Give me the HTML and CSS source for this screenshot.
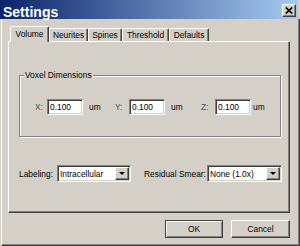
FILE: index.html
```html
<!DOCTYPE html>
<html lang="en">
<head>
  <meta charset="UTF-8">
  <title>Settings</title>
  <link rel="stylesheet" href="styles.css">
</head>
<body>
  <div class="window">
    <div class="titlebar">
      <span class="title">Settings</span>
      <span class="close">
        <svg width="8" height="7" viewBox="0 0 8 7"><path d="M0.8 0.5 L7.2 6.5 M7.2 0.5 L0.8 6.5" stroke="#000" stroke-width="1.7"/></svg>
      </span>
    </div>
    <div class="body">
      <div class="tabs">
        <div class="tab active w-volume">Volume</div>
        <div class="tab w-neurites">Neurites</div>
        <div class="tab w-spines">Spines</div>
        <div class="tab w-threshold">Threshold</div>
        <div class="tab w-defaults">Defaults</div>
      </div>
      <div class="panel">
        <fieldset class="group">
          <legend>Voxel Dimensions</legend>
          <div class="dims">
            <span class="lbl lbl-x">X:</span>
            <span class="field">0.100</span>
            <span class="unit unit-x">um</span>
            <span class="lbl lbl-yz">Y:</span>
            <span class="field">0.100</span>
            <span class="unit unit-y">um</span>
            <span class="lbl lbl-yz">Z:</span>
            <span class="field">0.100</span>
            <span class="unit unit-z">um</span>
          </div>
        </fieldset>
        <div class="options">
          <span class="opt-label w-labeling">Labeling:</span>
          <div class="select w-sel1"><span>Intracellular</span><span class="drop"><span class="arrow"></span></span></div>
          <span class="opt-label w-smear">Residual Smear:</span>
          <div class="select w-sel2"><span>None (1.0x)</span><span class="drop"><span class="arrow"></span></span></div>
        </div>
      </div>
      <div class="buttons">
        <div class="btn btn-default w-ok">OK</div>
        <div class="btn w-cancel">Cancel</div>
      </div>
    </div>
  </div>
</body>
</html>
```

FILE: styles.css
```css
* {
  box-sizing: border-box;
}
body {
  margin: 0;
  font-family: "Liberation Sans", Arial, sans-serif;
  font-size: 8.4px;
  color: #000;
}
.window {
  width: 300px;
  height: 246px;
  background: #d4d0c8;
  display: flex;
  flex-direction: column;
  overflow: hidden;
}
.titlebar {
  height: 19px;
  width: 298px;
  flex: none;
  background: linear-gradient(90deg, #0a246a, #a6caf0);
  display: flex;
  justify-content: space-between;
}
.title {
  color: #fff;
  font-weight: bold;
  font-size: 14px;
  padding: 4px 0 0 3px;
  line-height: normal;
}
.close {
  width: 14px;
  height: 13px;
  margin: 4px 2px 0 0;
  background: #d4d0c8;
  border: 1px solid;
  border-color: #fff #404040 #404040 #fff;
  box-shadow: inset -1px -1px 0 #808080;
  display: flex;
  align-items: center;
  justify-content: center;
}
.body {
  flex: 1;
  margin-left: 1px;
  border-left: 1px solid #fff;
  border-right: 1px solid #404040;
  border-bottom: 1px solid #404040;
  box-shadow: inset -1px -1px 0 #808080;
  padding: 7px 0 0 6px;
  display: flex;
  flex-direction: column;
}
.tabs {
  display: flex;
  align-items: flex-end;
  height: 15px;
  padding-left: 2px;
}
.tab {
  height: 13px;
  border-top: 1px solid #fff;
  border-left: 1px solid #fff;
  border-right: 1px solid #404040;
  box-shadow: inset -1px 0 0 #808080;
  border-radius: 2px 2px 0 0;
  display: flex;
  align-items: center;
  justify-content: center;
  line-height: 10px;
}
.tab.active {
  height: 16px;
  margin-bottom: -1px;
  position: relative;
  z-index: 1;
  background: #d4d0c8;
  padding-bottom: 2px;
}
.w-volume { width: 39px; }
.w-neurites { width: 39px; }
.w-spines { width: 34px; }
.w-threshold { width: 47px; }
.w-defaults { width: 40px; }
.panel {
  width: 282px;
  height: 172px;
  flex: none;
  border-top: 1px solid #fff;
  border-left: 1px solid #fff;
  border-right: 1px solid #404040;
  border-bottom: 1px solid #404040;
  box-shadow: inset -1px -1px 0 #808080;
  padding: 28px 0 0 10px;
}
.group {
  width: 262px;
  margin: 0;
  padding: 0;
  border: 1px solid #808080;
  box-shadow: 1px 1px 0 #fff, inset 1px 1px 0 #fff;
}
.group legend {
  margin-left: 4px;
  padding: 0 1px;
  line-height: 10px;
  background: #d4d0c8;
}
.dims {
  display: flex;
  align-items: center;
  height: 16px;
  margin: 19px 0 21px 15px;
}
.lbl {
  color: #505050;
}
.lbl-x { width: 12px; }
.lbl-yz { width: 14px; }
.field {
  width: 36px;
  height: 16px;
  background: #fff;
  border: 1px solid;
  border-color: #808080 #fff #fff #808080;
  box-shadow: inset 1px 1px 0 #404040, inset -1px -1px 0 #d4d0c8;
  padding-left: 2px;
  line-height: 14px;
}
.unit-x { margin-left: 6px; width: 26px; }
.unit-y { margin-left: 6px; width: 30px; }
.unit-z { margin-left: 2px; }
.options {
  display: flex;
  align-items: center;
  margin-top: 28px;
  height: 17px;
}
.w-labeling { width: 38px; }
.w-smear { width: 63px; margin-left: 13px; }
.select {
  height: 17px;
  background: #fff;
  border: 1px solid;
  border-color: #808080 #fff #fff #808080;
  box-shadow: inset 1px 1px 0 #404040, inset -1px -1px 0 #d4d0c8;
  padding: 2px 1px 2px 2px;
  display: flex;
  align-items: center;
  justify-content: space-between;
}
.w-sel1 { width: 74px; }
.w-sel2 { width: 75px; }
.drop {
  width: 14px;
  height: 13px;
  background: #d4d0c8;
  border: 1px solid;
  border-color: #fff #404040 #404040 #fff;
  box-shadow: inset -1px -1px 0 #808080;
  display: flex;
  align-items: center;
  justify-content: center;
}
.arrow {
  width: 0;
  height: 0;
  border-left: 3px solid transparent;
  border-right: 3px solid transparent;
  border-top: 3px solid #000;
}
.buttons {
  display: flex;
  justify-content: flex-end;
  gap: 8px;
  margin: 7px 9px 0 0;
}
.btn {
  height: 18px;
  background: #d4d0c8;
  border: 1px solid;
  border-color: #fff #404040 #404040 #fff;
  box-shadow: inset -1px -1px 0 #808080;
  display: flex;
  align-items: center;
  justify-content: center;
}
.btn-default {
  border-color: #404040;
  box-shadow: inset 1px 1px 0 #fff, inset -1px -1px 0 #808080;
}
.w-ok { width: 58px; }
.w-cancel { width: 59px; }
```
